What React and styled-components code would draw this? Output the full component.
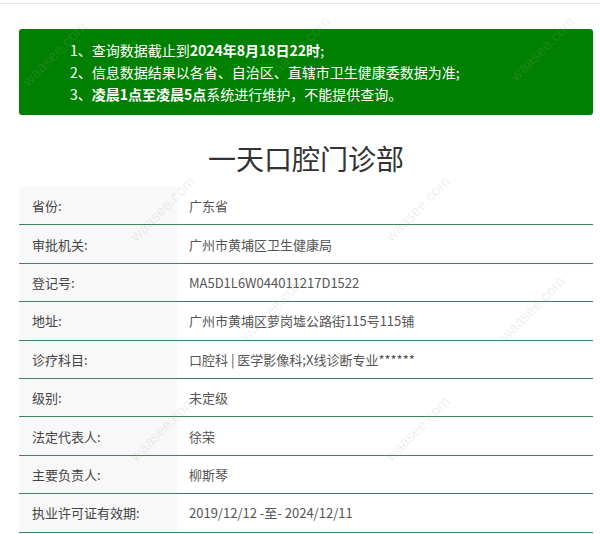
import React from "react";
import styled, { createGlobalStyle } from "styled-components";

const Global = createGlobalStyle`
  html, body { margin: 0; padding: 0; background: #fff; }
  body { font-family: "Noto Sans CJK SC", "Noto Sans", sans-serif; color: #333; }
`;

const Page = styled.div`
  position: relative;
  width: 600px;
  height: 534px;
  overflow: hidden;
`;

const TopRule = styled.div`
  height: 3px;
  border-bottom: 1px solid #e6e6e6;
`;

const Content = styled.div`
  margin: 25px 7px 0 19px;
`;

const Notice = styled.ol`
  list-style: none;
  margin: 0;
  background: #008000;
  border-radius: 3px;
  padding: 10px 0 10px 51px;
  color: #fff;
  font-size: 14px;
  line-height: 22px;
  height: 66px;
`;

const NoticeItem = styled.li`
  white-space: nowrap;
`;

const B = styled.b`
  font-weight: 700;
`;

const Title = styled.h1`
  margin: 0;
  padding: 28px 0 14px;
  text-align: center;
  font-size: 28px;
  line-height: 30px;
  font-weight: 400;
  color: #333;
`;

const Table = styled.div`
  display: grid;
  grid-template-columns: 158px 1fr;
`;

const Cell = styled.div`
  height: 37.4px;
  box-sizing: content-box;
  display: flex;
  align-items: center;
  padding-left: ${(p) => (p.$label ? "13px" : "12px")};
  background: ${(p) => (p.$label ? "#f8f8f8" : "#fff")};
  border-bottom: 1px solid #3f8560;
  font-size: 13px;
  color: ${(p) => (p.$label ? "#444" : "#555")};
  white-space: nowrap;
`;

const Mark = styled.span`
  position: absolute;
  transform: rotate(-45deg);
  font-family: "Liberation Sans", sans-serif;
  font-size: 15px;
  color: rgba(160, 160, 160, 0.18);
  pointer-events: none;
  white-space: nowrap;
`;

const rows = [
  ["省份:", "广东省"],
  ["审批机关:", "广州市黄埔区卫生健康局"],
  ["登记号:", "MA5D1L6W044011217D1522"],
  ["地址:", "广州市黄埔区萝岗墟公路街115号115铺"],
  ["诊疗科目:", "口腔科 | 医学影像科;X线诊断专业******"],
  ["级别:", "未定级"],
  ["法定代表人:", "徐荣"],
  ["主要负责人:", "柳斯琴"],
  ["执业许可证有效期:", "2019/12/12 -至- 2024/12/11"],
];

const marks = [
  [12, 45], [255, 40], [500, 40],
  [120, 200], [375, 200],
  [230, 300], [490, 300],
  [120, 420], [375, 420],
];

export default function App() {
  return (
    <Page>
      <Global />
      <TopRule />
      <Content>
        <Notice>
          <NoticeItem>1、查询数据截止到<B>2024年8月18日22时</B>;</NoticeItem>
          <NoticeItem>2、信息数据结果以各省、自治区、直辖市卫生健康委数据为准;</NoticeItem>
          <NoticeItem>3、<B>凌晨1点至凌晨5点</B>系统进行维护，不能提供查询。</NoticeItem>
        </Notice>
        <Title>一天口腔门诊部</Title>
        <Table>
          {rows.map(([k, v]) => (
            <React.Fragment key={k}>
              <Cell $label>{k}</Cell>
              <Cell>{v}</Cell>
            </React.Fragment>
          ))}
        </Table>
      </Content>
      {marks.map(([x, y], i) => (
        <Mark key={i} style={{ left: x, top: y }}>waasee.com</Mark>
      ))}
    </Page>
  );
}
